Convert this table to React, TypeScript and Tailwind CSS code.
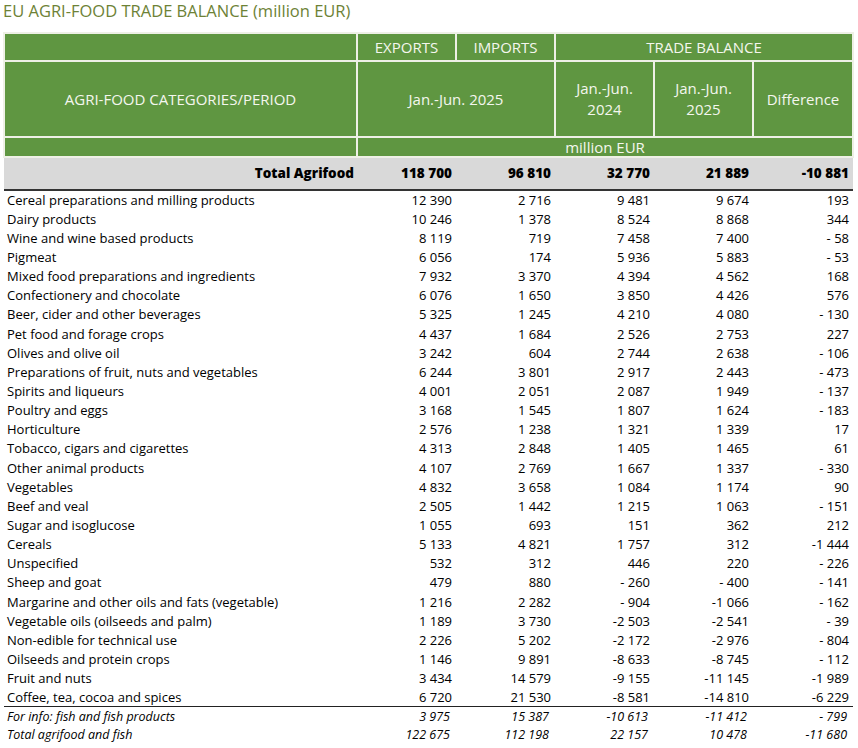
import React from "react";

const rows: [string, string, string, string, string, string][] = [
  ["Cereal preparations and milling products", "12 390", "2 716", "9 481", "9 674", "193"],
  ["Dairy products", "10 246", "1 378", "8 524", "8 868", "344"],
  ["Wine and wine based products", "8 119", "719", "7 458", "7 400", "- 58"],
  ["Pigmeat", "6 056", "174", "5 936", "5 883", "- 53"],
  ["Mixed food preparations and ingredients", "7 932", "3 370", "4 394", "4 562", "168"],
  ["Confectionery and chocolate", "6 076", "1 650", "3 850", "4 426", "576"],
  ["Beer, cider and other beverages", "5 325", "1 245", "4 210", "4 080", "- 130"],
  ["Pet food and forage crops", "4 437", "1 684", "2 526", "2 753", "227"],
  ["Olives and olive oil", "3 242", "604", "2 744", "2 638", "- 106"],
  ["Preparations of fruit, nuts and vegetables", "6 244", "3 801", "2 917", "2 443", "- 473"],
  ["Spirits and liqueurs", "4 001", "2 051", "2 087", "1 949", "- 137"],
  ["Poultry and eggs", "3 168", "1 545", "1 807", "1 624", "- 183"],
  ["Horticulture", "2 576", "1 238", "1 321", "1 339", "17"],
  ["Tobacco, cigars and cigarettes", "4 313", "2 848", "1 405", "1 465", "61"],
  ["Other animal products", "4 107", "2 769", "1 667", "1 337", "- 330"],
  ["Vegetables", "4 832", "3 658", "1 084", "1 174", "90"],
  ["Beef and veal", "2 505", "1 442", "1 215", "1 063", "- 151"],
  ["Sugar and isoglucose", "1 055", "693", "151", "362", "212"],
  ["Cereals", "5 133", "4 821", "1 757", "312", "-1 444"],
  ["Unspecified", "532", "312", "446", "220", "- 226"],
  ["Sheep and goat", "479", "880", "- 260", "- 400", "- 141"],
  ["Margarine and other oils and fats (vegetable)", "1 216", "2 282", "- 904", "-1 066", "- 162"],
  ["Vegetable oils (oilseeds and palm)", "1 189", "3 730", "-2 503", "-2 541", "- 39"],
  ["Non-edible for technical use", "2 226", "5 202", "-2 172", "-2 976", "- 804"],
  ["Oilseeds and protein crops", "1 146", "9 891", "-8 633", "-8 745", "- 112"],
  ["Fruit and nuts", "3 434", "14 579", "-9 155", "-11 145", "-1 989"],
  ["Coffee, tea, cocoa and spices", "6 720", "21 530", "-8 581", "-14 810", "-6 229"],
];

const extra: [string, string, string, string, string, string][] = [
  ["For info: fish and fish products", "3 975", "15 387", "-10 613", "-11 412", "- 799"],
  ["Total agrifood and fish", "122 675", "112 198", "22 157", "10 478", "-11 680"],
];

const H = "border-2 border-[#eef0e6] bg-[#5f9641] text-[#f4f6ee] text-center font-normal";

export default function App() {
  return (
    <div
      className="w-[858px] h-[748px] bg-white text-black"
      style={{ fontFamily: '"Open Sans", "Liberation Sans", sans-serif' }}
    >
      <div className="pl-[3px] h-[32px] text-[16.5px] leading-[22px] text-[#6d8236]">
        EU AGRI-FOOD TRADE BALANCE (million EUR)
      </div>
      <table className="ml-[3px] w-[849px] table-fixed border-collapse text-[13px]">
        <colgroup>
          <col className="w-[353px]" />
          <col className="w-[99px]" />
          <col className="w-[99px]" />
          <col className="w-[99px]" />
          <col className="w-[99px]" />
          <col className="w-[100px]" />
        </colgroup>
        <thead>
          <tr className="h-[28px] text-[15px]">
            <th className={H}></th>
            <th className={H}>EXPORTS</th>
            <th className={H}>IMPORTS</th>
            <th className={H} colSpan={3}>TRADE BALANCE</th>
          </tr>
          <tr className="h-[76px] text-[15px] leading-[21px]">
            <th className={H}>AGRI-FOOD CATEGORIES/PERIOD</th>
            <th className={H} colSpan={2}>Jan.-Jun. 2025</th>
            <th className={H}>Jan.-Jun.<br />2024</th>
            <th className={H}>Jan.-Jun.<br />2025</th>
            <th className={H}>Difference</th>
          </tr>
          <tr className="h-[20px] text-[15px] leading-[16px]">
            <th className={H}></th>
            <th className={H} colSpan={5}>million EUR</th>
          </tr>
        </thead>
        <tbody>
          <tr className="h-[33px] bg-[#d9d9d9] font-extrabold text-[13.5px] border-b-2 border-[#333]">
            <td className="text-right pr-[3px]">Total Agrifood</td>
            <td className="text-right pr-[4px]">118 700</td>
            <td className="text-right pr-[4px]">96 810</td>
            <td className="text-right pr-[4px]">32 770</td>
            <td className="text-right pr-[4px]">21 889</td>
            <td className="text-right pr-[4px]">-10 881</td>
          </tr>
          {rows.map((r, i) => (
            <tr
              key={i}
              className={
                "h-[19.15px] leading-[16px] " +
                (i === rows.length - 1 ? "border-b-[1.5px] border-[#222]" : "")
              }
            >
              <td className="pl-[3px] whitespace-nowrap">{r[0]}</td>
              {r.slice(1).map((v, j) => (
                <td key={j} className="text-right pr-[4px] whitespace-nowrap">
                  {v}
                </td>
              ))}
            </tr>
          ))}
          {extra.map((r, i) => (
            <tr key={"e" + i} className="h-[18.5px] italic text-[12.5px] leading-[15px]">
              <td className="pl-[3px] whitespace-nowrap">{r[0]}</td>
              {r.slice(1).map((v, j) => (
                <td key={j} className="text-right pr-[6px] whitespace-nowrap">
                  {v}
                </td>
              ))}
            </tr>
          ))}
        </tbody>
      </table>
    </div>
  );
}
